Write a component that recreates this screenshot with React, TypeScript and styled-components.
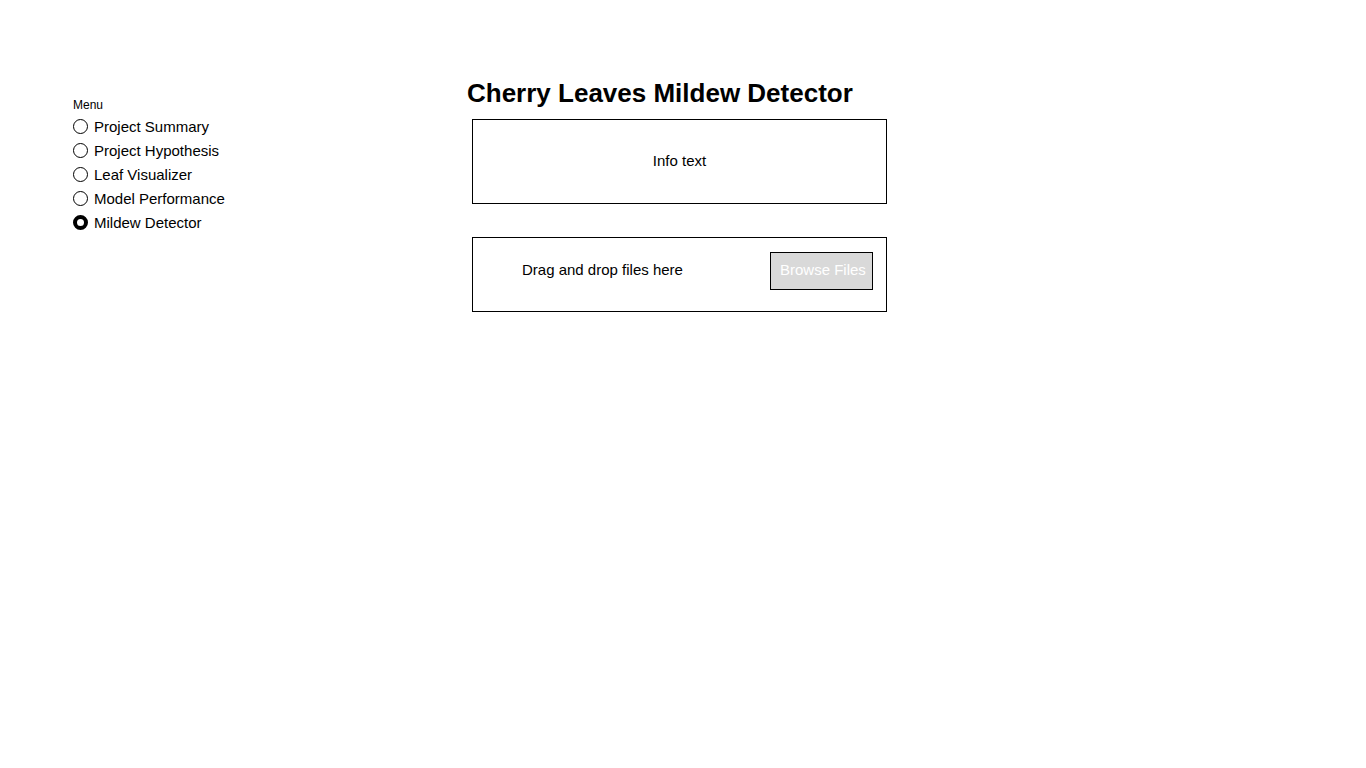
import React from 'react'
import styled, { createGlobalStyle } from 'styled-components'

const GlobalStyle = createGlobalStyle`
  body {
    margin: 0;
    background: #fff;
    font-family: "Liberation Sans", Arial, sans-serif;
    color: #000;
  }
`

const Page = styled.div`
  display: flex;
  width: 1366px;
  height: 768px;
  padding-left: 73px;
  box-sizing: border-box;
`

const Sidebar = styled.nav`
  width: 394px;
  padding-top: 98px;
  display: flex;
  flex-direction: column;
`

const MenuLabel = styled.div`
  font-size: 12px;
  line-height: 14px;
  margin-bottom: 2px;
`

const Option = styled.label`
  display: flex;
  align-items: center;
  gap: 6px;
  height: 24px;
  font-size: 15px;
`

const Radio = styled.span<{ $checked?: boolean }>`
  width: 15px;
  height: 15px;
  box-sizing: border-box;
  border-radius: 50%;
  border: ${(p) => (p.$checked ? '4px' : '1.3px')} solid #000;
  background: #fff;
`

const Main = styled.main`
  width: 420px;
  padding-top: 78px;
  display: flex;
  flex-direction: column;
`

const Title = styled.h1`
  margin: 0 0 11px;
  font-size: 26px;
  line-height: 30px;
  font-weight: bold;
`

const Box = styled.div<{ $height: number }>`
  margin-left: 5px;
  width: 415px;
  height: ${(p) => p.$height}px;
  box-sizing: border-box;
  border: 1px solid #000;
  display: flex;
  font-size: 15px;
`

const InfoBox = styled(Box)`
  align-items: center;
  justify-content: center;
  margin-bottom: 33px;
  padding-bottom: 2px;
`

const DropBox = styled(Box)`
  align-items: flex-start;
  justify-content: space-between;
  padding: 14px 13px 0 49px;
`

const DropText = styled.span`
  line-height: 36px;
`

const BrowseButton = styled.button`
  width: 103px;
  height: 38px;
  background: #d9d9d9;
  border: 1px solid #000;
  color: #fff;
  font-family: inherit;
  font-size: 15px;
  line-height: 17px;
  padding: 0 0 3px 9px;
  text-align: left;
  white-space: nowrap;
`

const menu = [
  'Project Summary',
  'Project Hypothesis',
  'Leaf Visualizer',
  'Model Performance',
  'Mildew Detector',
]

export default function App() {
  return (
    <>
      <GlobalStyle />
      <Page>
        <Sidebar>
          <MenuLabel>Menu</MenuLabel>
          {menu.map((item) => (
            <Option key={item}>
              <Radio $checked={item === 'Mildew Detector'} />
              {item}
            </Option>
          ))}
        </Sidebar>
        <Main>
          <Title>Cherry Leaves Mildew Detector</Title>
          <InfoBox $height={85}>Info text</InfoBox>
          <DropBox $height={75}>
            <DropText>Drag and drop files here</DropText>
            <BrowseButton>Browse Files</BrowseButton>
          </DropBox>
        </Main>
      </Page>
    </>
  )
}
